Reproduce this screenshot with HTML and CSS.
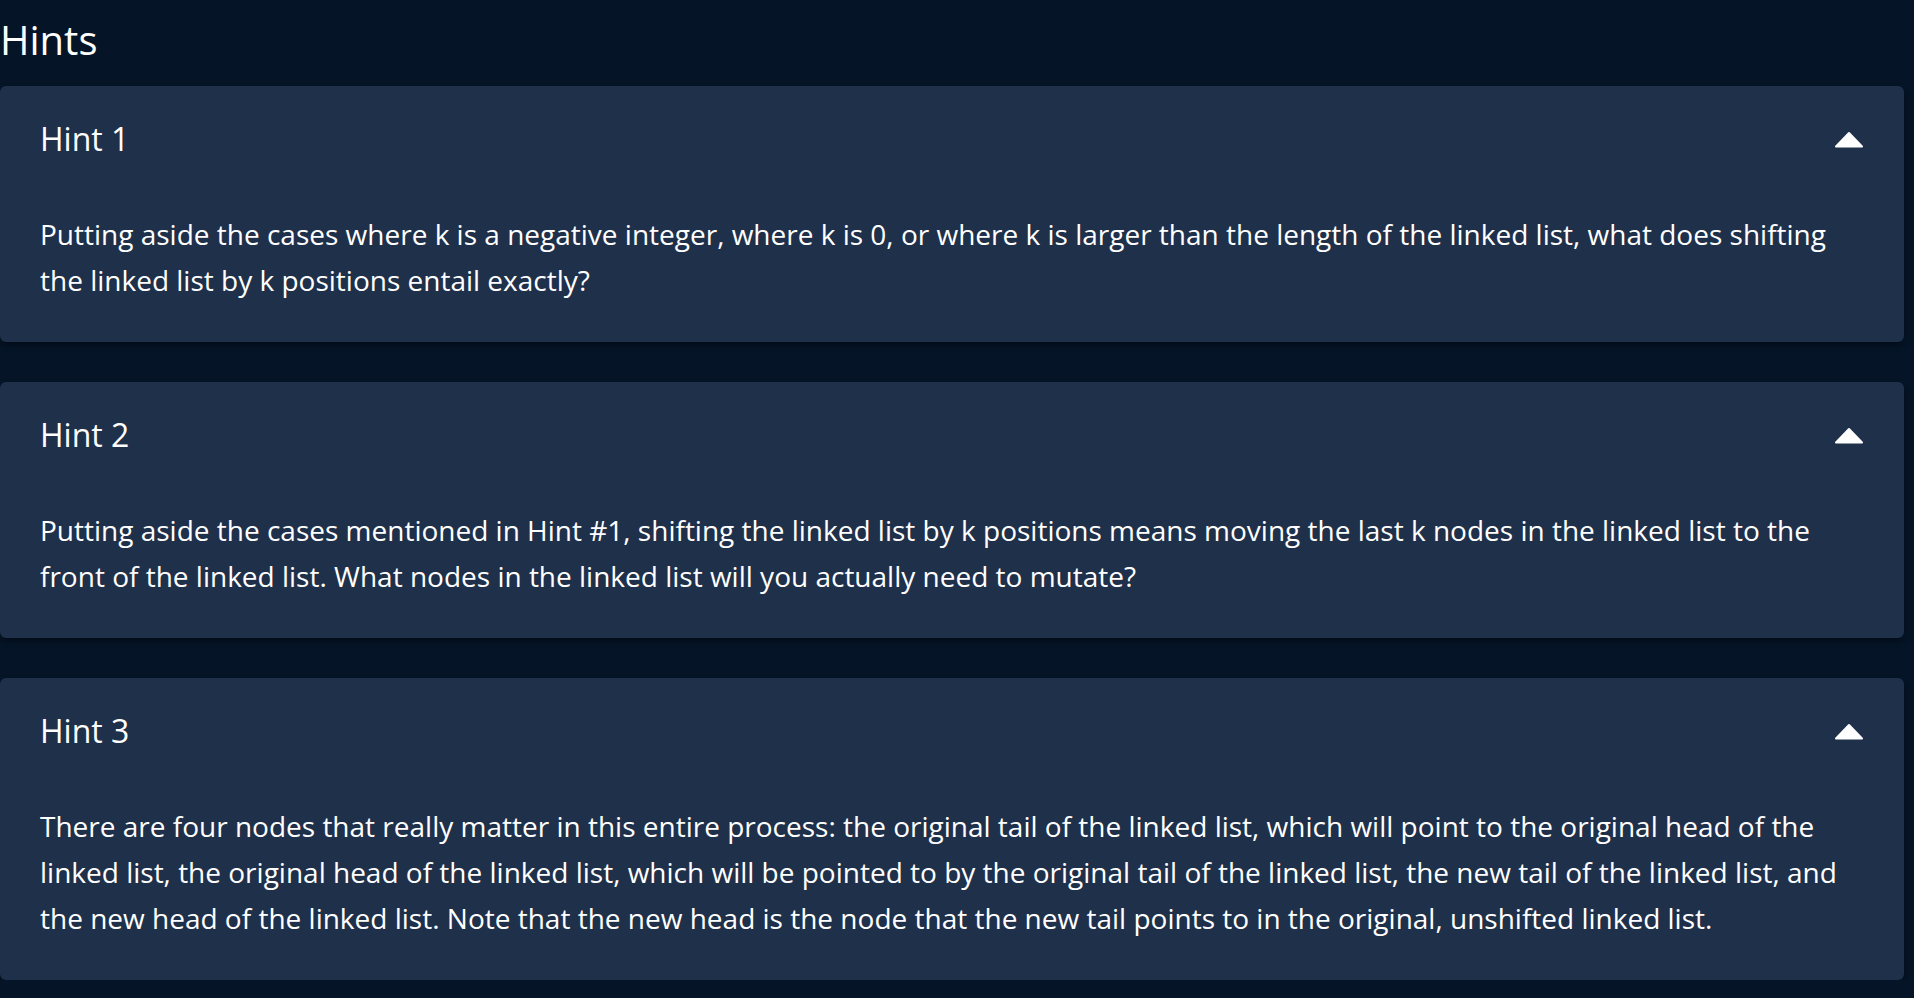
FILE: index.html
```html
<!DOCTYPE html>
<html lang="en">
<head>
<meta charset="utf-8">
<title>Hints</title>
<link rel="stylesheet" href="styles.css">
</head>
<body>
<main class="page">
  <h2 class="page-title">Hints</h2>
  <section class="hint">
    <div class="hint-header">
      <h3 class="hint-title">Hint 1</h3>
      <svg class="hint-toggle" viewBox="0 0 30 17" width="30" height="17" aria-hidden="true"><polygon points="2,15.5 15,2 28,15.5" fill="#fff" stroke="#fff" stroke-width="2" stroke-linejoin="round"/></svg>
    </div>
    <p class="hint-body">Putting aside the cases where k is a negative integer, where k is 0, or where k is larger than the length of the linked list, what does shifting the linked list by k positions entail exactly?</p>
  </section>
  <section class="hint">
    <div class="hint-header">
      <h3 class="hint-title">Hint 2</h3>
      <svg class="hint-toggle" viewBox="0 0 30 17" width="30" height="17" aria-hidden="true"><polygon points="2,15.5 15,2 28,15.5" fill="#fff" stroke="#fff" stroke-width="2" stroke-linejoin="round"/></svg>
    </div>
    <p class="hint-body">Putting aside the cases mentioned in Hint #1, shifting the linked list by k positions means moving the last k nodes in the linked list to the front of the linked list. What nodes in the linked list will you actually need to mutate?</p>
  </section>
  <section class="hint">
    <div class="hint-header">
      <h3 class="hint-title">Hint 3</h3>
      <svg class="hint-toggle" viewBox="0 0 30 17" width="30" height="17" aria-hidden="true"><polygon points="2,15.5 15,2 28,15.5" fill="#fff" stroke="#fff" stroke-width="2" stroke-linejoin="round"/></svg>
    </div>
    <p class="hint-body">There are four nodes that really matter in this entire process: the original tail of the linked list, which will point to the original head of the linked list, the original head of the linked list, which will be pointed to by the original tail of the linked list, the new tail of the linked list, and the new head of the linked list. Note that the new head is the node that the new tail points to in the original, unshifted linked list.</p>
  </section>
</main>
</body>
</html>
```

FILE: styles.css
```css
html, body {
  margin: 0;
  padding: 0;
  background: #051527;
  color: #fff;
  font-family: "Open Sans", "Noto Sans", sans-serif;
}

.page {
  padding: 0 10px 0 0;
  display: flex;
  flex-direction: column;
  gap: 40px;
}

.page-title {
  margin: 16px 0 -18px;
  font-size: 40px;
  line-height: 48px;
  font-weight: 500;
  color: #fff;
}

.hint {
  background: #1f304a;
  border-radius: 6px;
  box-shadow: 0 3px 6px rgba(0, 0, 0, 0.45);
  padding: 31px 40px 39px;
}

.hint-header {
  display: flex;
  align-items: center;
  justify-content: space-between;
  height: 44px;
}

.hint-title {
  margin: 0;
  font-size: 32px;
  line-height: 44px;
  font-weight: 400;
  color: #fff;
}

.hint-toggle {
  display: block;
}

.hint-body {
  margin: 50px 0 0;
  font-size: 28px;
  line-height: 46px;
  color: #fff;
}
```
